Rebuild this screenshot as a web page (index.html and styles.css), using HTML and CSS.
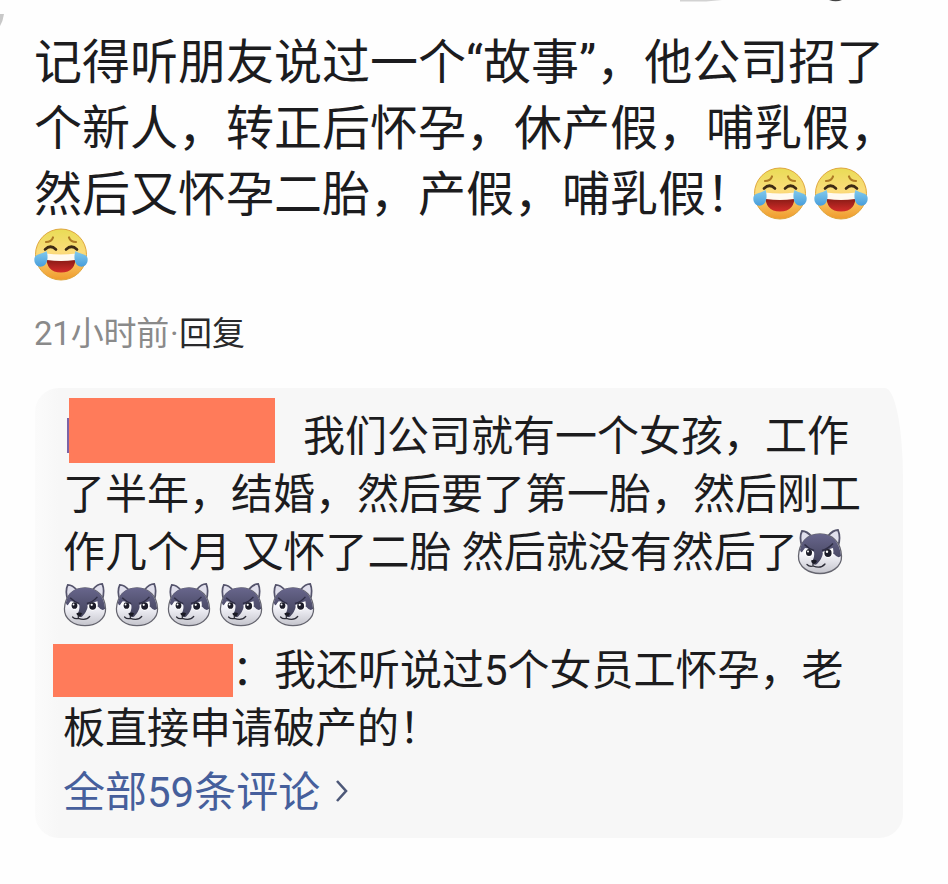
FILE: index.html
```
<!DOCTYPE html>
<html lang="zh-CN">
<head>
    <meta charset="UTF-8">
    <meta name="viewport" content="width=device-width, initial-scale=1.0">
    <title>评论</title>
    <link rel="stylesheet" href="styles.css">
</head>
<body>
    <svg class="defs" width="0" height="0">
        <defs>
            <linearGradient id="face" x1="0" y1="0" x2="0" y2="1">
                <stop offset="0" stop-color="#e9dc55"/>
                <stop offset="0.45" stop-color="#fbdc7c"/>
                <stop offset="1" stop-color="#f09a2c"/>
            </linearGradient>
            <linearGradient id="tear" x1="0" y1="0" x2="0" y2="1">
                <stop offset="0" stop-color="#83caec"/>
                <stop offset="1" stop-color="#489edc"/>
            </linearGradient>
            <linearGradient id="mouth" x1="0" y1="0" x2="0" y2="1">
                <stop offset="0.3" stop-color="#8c1c16"/>
                <stop offset="1" stop-color="#d42c2a"/>
            </linearGradient>
            <linearGradient id="fur" x1="0" y1="0" x2="0" y2="1">
                <stop offset="0" stop-color="#68668c"/>
                <stop offset="1" stop-color="#41415a"/>
            </linearGradient>
            <linearGradient id="cheek" x1="0" y1="0" x2="0" y2="1">
                <stop offset="0.5" stop-color="#f5f5fb"/>
                <stop offset="1" stop-color="#c4c4cc"/>
            </linearGradient>
        </defs>
        <symbol id="joy" viewBox="0 0 54 54">
            <circle cx="27" cy="26.500" r="25.500" fill="url(#face)" stroke="#dfa63c" stroke-width="1"/>
            <path d="M12 14q5.500 0 7-4.500M42 14q-5.500 0-7-4.500" fill="none" stroke="#ad7a24" stroke-width="2.200" stroke-linecap="round"/>
            <path d="M11 21.500q5.500-5.500 11 0M32 21.500q5.500-5.500 11 0" fill="none" stroke="#3d2a14" stroke-width="2.600" stroke-linecap="round"/>
            <path d="M12.500 27q14.500 3 29 0q1 17.500-14.500 17.500t-14.500-17.500z" fill="url(#mouth)"/>
            <path d="M12 25.500q15 2 30 0q.5 3.500-1 6.500q-14 2-28 0q-1.500-3-1-6.500z" fill="#fffaf0"/>
            <path d="M12.500 23c2 5 1.500 14-4.500 15.500c-5 1-8.500-3.500-7.500-8.500c1-4.500 7-3.500 12-7zM41.500 23c-2 5-1.500 14 4.500 15.500c5 1 8.500-3.500 7.500-8.500c-1-4.500-7-3.500-12-7z" fill="url(#tear)"/>
        </symbol>
        <symbol id="wolf" viewBox="0 0 46 46">
            <path d="M5 18Q2 8 5 2Q10 2 15 8ZM31 7Q36 1 41 1Q44 8 41 18Z" fill="#e0dfec" stroke="#55546c" stroke-width="1.800"/>
            <path d="M23 5C36 5 44 14 44.500 27C45 38 34 44.500 23 44.500S1 38 1.500 27C2 14 10 5 23 5z" fill="url(#cheek)" stroke="#65656f" stroke-width="1.300"/>
            <path d="M23 5C35 5 43 13 44 27Q41 30 37 25Q34 22 26 24Q25 30 20 35Q17 37 15 33Q18 27 17 23Q13 19 8 19Q6 22 5 23Q4 24 3 21C5 10 12 5 23 5z" fill="url(#fur)"/>
            <path d="M6.500 21Q10 19 16 22Q17 28 12 28Q7 27 6.500 21zM25.500 23Q31 20 36 19Q38 28 31 29Q26 28 25.500 23z" fill="#fff"/>
            <ellipse cx="12" cy="23.500" rx="3" ry="3.500" fill="#1c1c29"/>
            <ellipse cx="31" cy="24" rx="3.600" ry="3.900" fill="#1c1c29"/>
            <circle cx="11" cy="22.500" r="1" fill="#fff"/>
            <circle cx="30" cy="22.800" r="1.200" fill="#fff"/>
            <path d="M7.500 15.500Q12 20 17 21.500M25 21.500Q31 20 36 14.500" fill="none" stroke="#2f2e45" stroke-width="1.500"/>
            <path d="M14 31.500Q18 30 20 32Q18.500 35.500 16.500 35Q14 33.500 14 31.500z" fill="#1b1b25"/>
            <path d="M16 34.500V36.500M10 35.500Q12.500 38 16 37Q24 40 28 35" fill="none" stroke="#2c2c37" stroke-width="1.300" stroke-linecap="round"/>
        </symbol>
    </svg>

    <svg class="top-edge" width="948" height="28" viewBox="0 0 948 28">
        <path d="M680 0h42l-16 1.500h-26z" fill="#d2d2d2"/>
        <path d="M829 0h13q-6 2.500-13 0z" fill="#444"/>
        <path d="M0 14h4q-1 7-4 12z" fill="#c8c8c8"/>
    </svg>

    <div class="comment">
        <div class="comment-text">
            <div>记得听朋友说过一个“故事”，他公司招了</div>
            <div>个新人，转正后怀孕，休产假，哺乳假，</div>
            <div class="row">然后又怀孕二胎，产假，哺乳假！<span class="joys"><svg class="joy"><use href="#joy"/></svg><svg class="joy"><use href="#joy"/></svg></span></div>
            <div class="row joy-row"><svg class="joy"><use href="#joy"/></svg></div>
        </div>
        <div class="meta">21小时前<span class="dot">·</span><span class="reply">回复</span></div>

        <div class="replies">
            <div class="row first"><span class="name name-a"></span><span class="first-text">我们公司就有一个女孩，工作</span></div>
            <div class="row">了半年，结婚，然后要了第一胎，然后刚工</div>
            <div class="row">作几个月 又怀了二胎 然后就没有然后了<svg class="wolf"><use href="#wolf"/></svg></div>
            <div class="row wolf-row">
                <svg class="wolf"><use href="#wolf"/></svg>
                <svg class="wolf"><use href="#wolf"/></svg>
                <svg class="wolf"><use href="#wolf"/></svg>
                <svg class="wolf"><use href="#wolf"/></svg>
                <svg class="wolf"><use href="#wolf"/></svg>
            </div>
            <div class="row second"><span class="name name-b"></span><span class="second-text">：我还听说过5个女员工怀孕，老</span></div>
            <div class="row">板直接申请破产的！</div>
            <div class="row more">全部59条评论<svg class="chevron" viewBox="0 0 14 24"><path d="M2 2l9 10l-9 10" fill="none" stroke="#4d5878" stroke-width="2.600"/></svg></div>
        </div>
    </div>
</body>
</html>
```
FILE: styles.css
```
body {
    margin: 0;
    background: #fefefe;
    color: #1c1c1e;
    font-family: Roboto, "Noto Sans CJK SC", sans-serif;
    height: 884px;
    overflow: hidden;
}
.defs {
    display: block;
}
.top-edge {
    position: absolute;
    top: 0;
    left: 0;
}
.comment {
    padding: 30px 45px 0 34px;
    white-space: nowrap;
}
.comment-text {
    font-size: 48px;
    line-height: 66px;
}
.row {
    display: flex;
    align-items: center;
    white-space: pre;
}
.joys {
    display: flex;
    gap: 7px;
    margin: -2px 0 0 -1px;
}
.joy {
    display: block;
    width: 54px;
    height: 54px;
}
.joy-row {
    height: 53px;
}
.meta {
    margin-top: 29px;
    height: 48px;
    line-height: 48px;
    font-size: 33px;
    letter-spacing: -0.2px;
    color: #8a8a8a;
}
.dot {
    display: inline-block;
    width: 10px;
    text-align: center;
}
.reply {
    color: #29292b;
}
.replies {
    box-sizing: border-box;
    height: 450px;
    margin: 30px 0 0 1px;
    padding: 10px 0 0 28px;
    background: linear-gradient(to right, #fbfbfb, #f7f7f7 24px);
    border-radius: 24px 18px 24px 24px / 24px 90px 24px 24px;
    font-size: 42px;
    line-height: 58px;
}
.name {
    flex: none;
    background: #ff7b5a;
}
.first {
    height: 68px;
    align-items: flex-start;
}
.first-text {
    margin-top: 10px;
}
.name-a {
    width: 208px;
    height: 65px;
    margin: 0 28px 0 4px;
    background: linear-gradient(#7c63a5, #7c63a5) 0 20px / 2px 35px no-repeat, linear-gradient(to right, transparent 2px, #ff7b5a 2px);
}
.wolf {
    flex: none;
    width: 46px;
    height: 46px;
    margin: -2px 0 0 -1px;
}
.wolf-row {
    height: 48px;
    gap: 8px;
}
.wolf-row .wolf {
    width: 44px;
    margin-left: 0;
}
.name-b {
    width: 180px;
    height: 53px;
    margin: -1px 0 0 -10px;
}
.second {
    margin-top: 12px;
}
.second-text {
    margin-left: -1px;
}
.more {
    margin-top: 6px;
    color: #465f9c;
}
.chevron {
    width: 14px;
    height: 24px;
    margin: -4px 0 0 15px;
}
```
